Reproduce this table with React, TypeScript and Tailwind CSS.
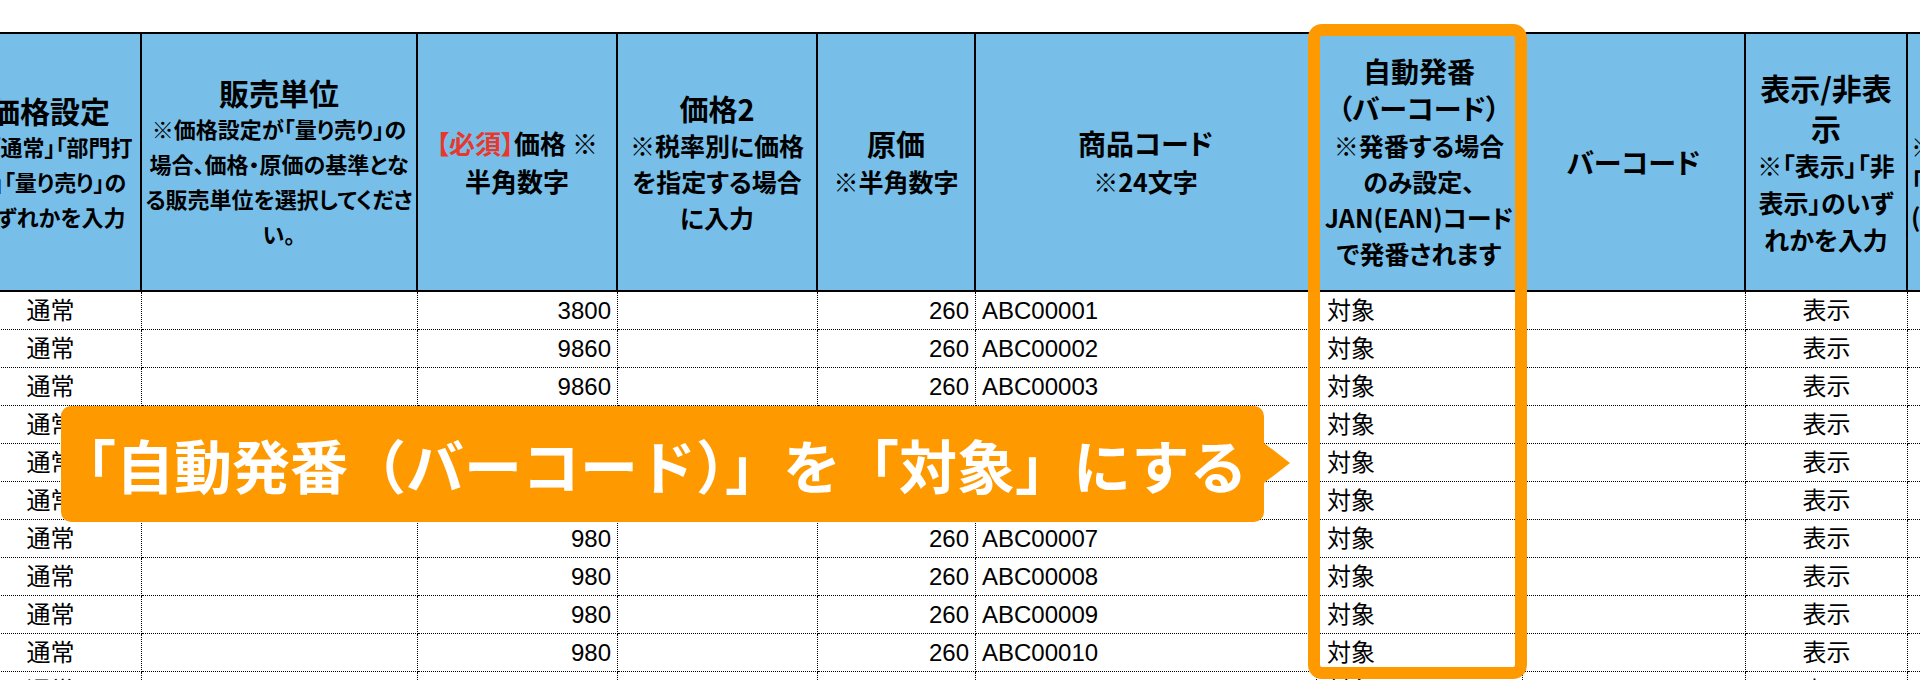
import React from 'react';

// column widths, left to right (first column starts off-screen)
const W = [
  'w-[182px]',
  'w-[276px]',
  'w-[200px]',
  'w-[200px]',
  'w-[158px]',
  'w-[341px]',
  'w-[206px]',
  'w-[223px]',
  'w-[162px]',
  'w-[200px]',
];

const rows = [
  { price: '3800', code: 'ABC00001' },
  { price: '9860', code: 'ABC00002' },
  { price: '9860', code: 'ABC00003' },
  { price: '980', code: 'ABC00004' },
  { price: '980', code: 'ABC00005' },
  { price: '980', code: 'ABC00006' },
  { price: '980', code: 'ABC00007' },
  { price: '980', code: 'ABC00008' },
  { price: '980', code: 'ABC00009' },
  { price: '980', code: 'ABC00010' },
  { price: '980', code: 'ABC00011' },
];

const HeadCell = ({ w, children }: { w: string; children?: React.ReactNode }) => (
  <div className={`${w} shrink-0 h-[256px] border-r-2 border-black flex flex-col items-center justify-center text-center whitespace-nowrap`}>
    {children}
  </div>
);

const Cell = ({ w, align = 'justify-start', children }: { w: string; align?: string; children?: React.ReactNode }) => (
  <div className={`${w} ${align} shrink-0 h-[38px] flex items-center px-[6px] border-r border-b border-dotted border-black whitespace-nowrap`}>
    {children}
  </div>
);

const App: React.FC = () => {
  return (
    <div className="relative w-[1920px] h-[680px] overflow-hidden bg-white text-black">
      <div className="pt-[32px] ml-[-40px] w-max">
        {/* Header */}
        <div className="flex border-y-2 border-black bg-[#77bfe9] font-['Noto_Sans_CJK_JP',sans-serif] font-bold [font-feature-settings:'palt']">
          <HeadCell w={W[0]}>
            <p className="text-[30px] leading-[38px]">価格設定</p>
            <p className="text-[22px] leading-[35px]">※「通常」「部門打<br />ち」「量り売り」の<br />いずれかを入力</p>
          </HeadCell>
          <HeadCell w={W[1]}>
            <p className="text-[30px] leading-[38px]">販売単位</p>
            <p className="text-[22px] leading-[35px]">※価格設定が「量り売り」の<br />場合、価格・原価の基準とな<br />る販売単位を選択してくださ<br />い。</p>
          </HeadCell>
          <HeadCell w={W[2]}>
            <p className="text-[26px] leading-[38px]"><span className="text-[#e8382d]">【必須】</span>価格 ※<br />半角数字</p>
          </HeadCell>
          <HeadCell w={W[3]}>
            <p className="text-[29px] leading-[38px]">価格2</p>
            <p className="text-[25px] leading-[36px]">※税率別に価格<br />を指定する場合<br />に入力</p>
          </HeadCell>
          <HeadCell w={W[4]}>
            <p className="text-[29px] leading-[38px]">原価</p>
            <p className="text-[25px] leading-[38px]">※半角数字</p>
          </HeadCell>
          <HeadCell w={W[5]}>
            <p className="text-[28px] leading-[38px]">商品コード</p>
            <p className="text-[25px] leading-[38px]">※24文字</p>
          </HeadCell>
          <HeadCell w={W[6]}>
            <p className="text-[28px] leading-[37px]">自動発番<br />（バーコード）</p>
            <p className="text-[25px] leading-[36px]">※発番する場合<br />のみ設定、<br />JAN(EAN)コード<br />で発番されます</p>
          </HeadCell>
          <HeadCell w={W[7]}>
            <p className="text-[28px] leading-[38px]">バーコード</p>
          </HeadCell>
          <HeadCell w={W[8]}>
            <p className="text-[30px] leading-[40px]">表示/非表<br />示</p>
            <p className="text-[25px] leading-[37px]">※「表示」「非<br />表示」のいず<br />れかを入力</p>
          </HeadCell>
          <HeadCell w={W[9]}>
            <p className="text-[29px] leading-[38px]">税区分</p>
            <p className="self-stretch pl-[3px] text-left text-[25px] leading-[35px]">※「標準」「軽減<br />「非課税」のい<br />(空欄は標準)</p>
          </HeadCell>
        </div>

        {/* Body */}
        <div className="font-['Liberation_Sans','Noto_Sans_CJK_JP',sans-serif] text-[24px]">
          {rows.map(r => (
            <div key={r.code} className="flex">
              <Cell w={W[0]} align="justify-center">通常</Cell>
              <Cell w={W[1]} />
              <Cell w={W[2]} align="justify-end">{r.price}</Cell>
              <Cell w={W[3]} />
              <Cell w={W[4]} align="justify-end">260</Cell>
              <Cell w={W[5]}>{r.code}</Cell>
              <Cell w={W[6]}><span className="pl-[4px]">対象</span></Cell>
              <Cell w={W[7]} />
              <Cell w={W[8]} align="justify-center">表示</Cell>
              <Cell w={W[9]} />
            </div>
          ))}
        </div>
      </div>

      {/* Highlight around the auto-numbering column */}
      <div className="absolute left-[1308px] top-[24px] w-[219px] h-[655px] border-[12px] border-[#ff9900] rounded-[14px]" />

      {/* Callout */}
      <div className="absolute left-[61px] top-[406px] w-[1203px] h-[116px] rounded-[10px] bg-[#ff9900] flex items-center">
        <span className="ml-[-3px] font-['Noto_Sans_CJK_JP',sans-serif] font-bold text-[58px] leading-none text-white whitespace-nowrap">
          「自動発番（バーコード）」を「対象」にする
        </span>
        <div className="absolute right-[-26px] top-[37px] w-0 h-0 border-y-[20px] border-y-transparent border-l-[26px] border-l-[#ff9900]" />
      </div>
    </div>
  );
};

export default App;
